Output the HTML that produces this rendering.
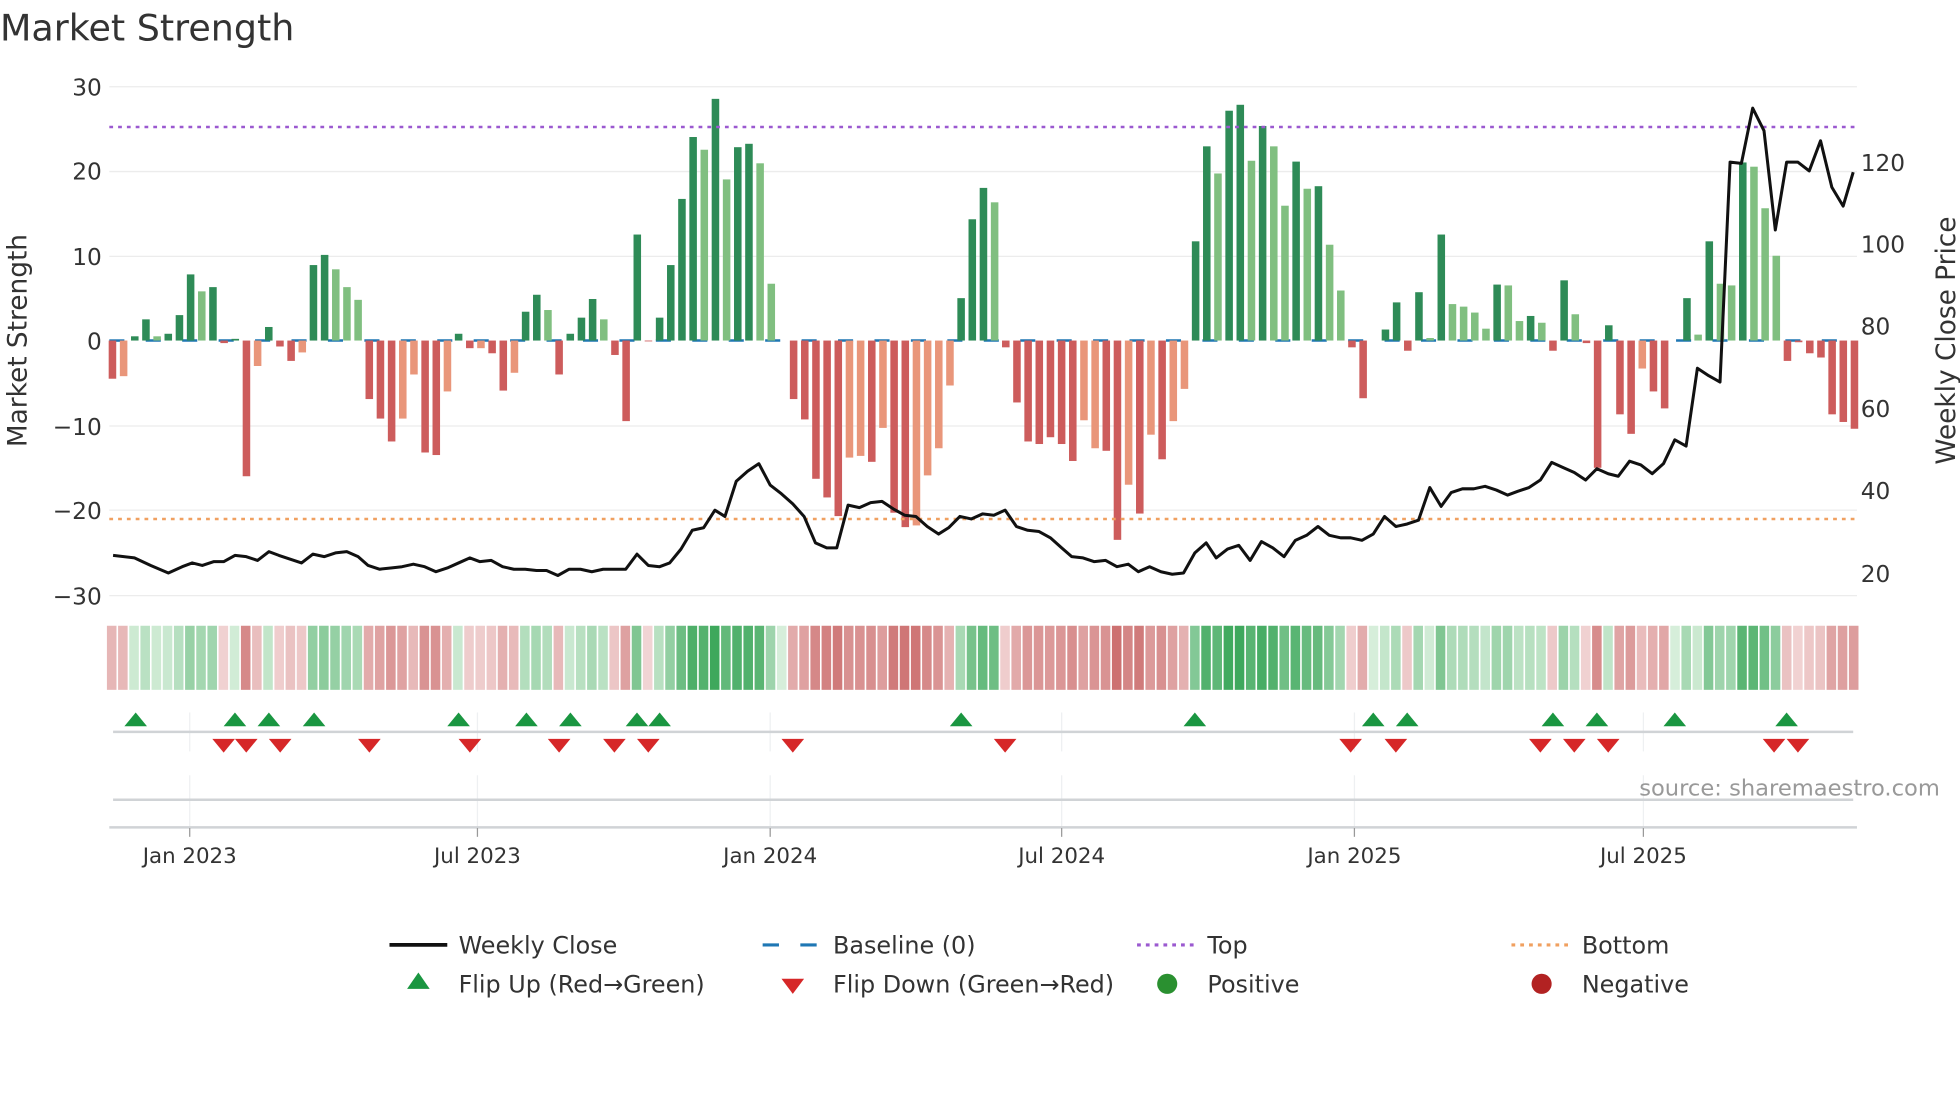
<!DOCTYPE html>
<html><head><meta charset="utf-8"><style>
html,body{margin:0;padding:0;background:#fff;}
svg{display:block;font-family:"DejaVu Sans","Liberation Sans",sans-serif;}
</style></head><body>
<svg id="s" width="1960" height="1102" viewBox="0 0 1560 877" xmlns="http://www.w3.org/2000/svg">
<rect width="1560" height="877" fill="#fff"/>
<text x="0" y="32" font-size="29" fill="#333">Market Strength</text>
<g stroke="#ececec" stroke-width="1">
<line x1="87" x2="1478" y1="69" y2="69"/><line x1="87" x2="1478" y1="136.5" y2="136.5"/>
<line x1="87" x2="1478" y1="204" y2="204"/><line x1="87" x2="1478" y1="339" y2="339"/>
<line x1="87" x2="1478" y1="406" y2="406"/><line x1="87" x2="1478" y1="474" y2="474"/>
</g>
<g font-size="18.5" fill="#333" text-anchor="end">
<text x="81" y="76">30</text><text x="81" y="143">20</text><text x="81" y="211">10</text>
<text x="81" y="278">0</text><text x="81" y="346">−10</text><text x="81" y="413">−20</text><text x="81" y="481">−30</text>
</g>
<g font-size="18.5" fill="#333">
<text x="1481" y="136">120</text><text x="1481" y="201">100</text><text x="1481" y="266">80</text>
<text x="1481" y="332">60</text><text x="1481" y="397">40</text><text x="1481" y="463">20</text>
</g>
<text transform="translate(21,271) rotate(-90)" font-size="21" fill="#333" text-anchor="middle">Market Strength</text>
<text transform="translate(1556,271) rotate(-90)" font-size="21" fill="#333" text-anchor="middle">Weekly Close Price</text>
<line x1="87" x2="1478" y1="271" y2="271" stroke="#1f77b4" stroke-width="2" stroke-dasharray="12,17"/>
<g id="bars"></g>
<g id="heat"></g>
<line x1="87" x2="1478" y1="101" y2="101" stroke="#9b59d0" stroke-width="2" stroke-dasharray="3,4"/>
<line x1="87" x2="1478" y1="413" y2="413" stroke="#f0a060" stroke-width="2" stroke-dasharray="3,4"/>
<polyline id="price" fill="none" stroke="#111" stroke-width="2.4" stroke-linejoin="round" points=""/>
<g stroke="#eef0f2" stroke-width="1">
<line x1="151" x2="151" y1="567" y2="598"/><line x1="380" x2="380" y1="567" y2="598"/><line x1="613" x2="613" y1="567" y2="598"/>
<line x1="845" x2="845" y1="567" y2="598"/><line x1="1078" x2="1078" y1="567" y2="598"/><line x1="1308" x2="1308" y1="567" y2="598"/>
<line x1="151" x2="151" y1="617" y2="658"/><line x1="380" x2="380" y1="617" y2="658"/><line x1="613" x2="613" y1="617" y2="658"/>
<line x1="845" x2="845" y1="617" y2="658"/><line x1="1078" x2="1078" y1="617" y2="658"/><line x1="1308" x2="1308" y1="617" y2="658"/>
</g>
<line x1="90" x2="1475" y1="582.5" y2="582.5" stroke="#d0d3d6" stroke-width="2"/>
<line x1="90" x2="1475" y1="636.5" y2="636.5" stroke="#d0d3d6" stroke-width="2"/>
<line x1="87" x2="1478" y1="658.5" y2="658.5" stroke="#d0d3d6" stroke-width="2"/>
<g stroke="#999" stroke-width="1">
<line x1="151" x2="151" y1="659" y2="666"/><line x1="380" x2="380" y1="659" y2="666"/><line x1="613" x2="613" y1="659" y2="666"/>
<line x1="845" x2="845" y1="659" y2="666"/><line x1="1078" x2="1078" y1="659" y2="666"/><line x1="1308" x2="1308" y1="659" y2="666"/>
</g>
<g id="mk"></g>
<g font-size="17" fill="#333" text-anchor="middle">
<text x="151" y="687">Jan 2023</text><text x="380" y="687">Jul 2023</text><text x="613" y="687">Jan 2024</text>
<text x="845" y="687">Jul 2024</text><text x="1078" y="687">Jan 2025</text><text x="1308" y="687">Jul 2025</text>
</g>
<text x="1544" y="633" font-size="18" fill="#999" text-anchor="end">source: sharemaestro.com</text>
<g font-size="19" fill="#333">
<line x1="310" x2="356" y1="752" y2="752" stroke="#111" stroke-width="3"/>
<text x="365" y="759">Weekly Close</text>
<line x1="607" x2="651" y1="752" y2="752" stroke="#1f77b4" stroke-width="2.5" stroke-dasharray="13,17"/>
<text x="663" y="759">Baseline (0)</text>
<line x1="905" x2="950" y1="752" y2="752" stroke="#9b59d0" stroke-width="2.5" stroke-dasharray="3,4"/>
<text x="961" y="759">Top</text>
<line x1="1203" x2="1248" y1="752" y2="752" stroke="#f0a060" stroke-width="2.5" stroke-dasharray="3,4"/>
<text x="1259" y="759">Bottom</text>
<polygon points="333,774 342,787 324,787" fill="#1a9641"/>
<text x="365" y="790">Flip Up (Red→Green)</text>
<polygon points="622,779 640,779 631,791" fill="#d62728"/>
<text x="663" y="790">Flip Down (Green→Red)</text>
<circle cx="929" cy="783" r="8" fill="#2a9030"/>
<text x="961" y="790">Positive</text>
<circle cx="1227" cy="783" r="8" fill="#b22222"/>
<text x="1259" y="790">Negative</text>
</g>
</svg>
<script>
var V=[-4.5,-4.2,0.5,2.5,0.5,0.8,3,7.8,5.8,6.3,-0.3,0.2,-16,-3,1.6,-0.7,-2.4,-1.4,8.9,10.1,8.4,6.3,4.8,-6.9,-9.2,-11.9,-9.2,-4,-13.2,-13.5,-6,0.8,-0.9,-0.9,-1.5,-5.9,-3.8,3.4,5.4,3.6,-4,0.8,2.7,4.9,2.5,-1.7,-9.5,12.5,-0.1,2.7,8.9,16.7,24,22.5,28.5,19,22.8,23.2,20.9,6.7,0,-6.9,-9.3,-16.3,-18.5,-20.7,-13.8,-13.6,-14.3,-10.3,-20.3,-22,-21.8,-15.9,-12.7,-5.3,5,14.3,18,16.3,-0.8,-7.3,-11.9,-12.2,-11.4,-12.2,-14.2,-9.4,-12.7,-13,-23.5,-17,-20.4,-11.1,-14,-9.5,-5.7,11.7,22.9,19.7,27.1,27.8,21.2,25.3,22.9,15.9,21.1,17.9,18.2,11.3,5.9,-0.8,-6.8,0,1.3,4.5,-1.2,5.7,0.3,12.5,4.3,4,3.3,1.4,6.6,6.5,2.3,2.9,2.1,-1.2,7.1,3.1,-0.3,-15,1.8,-8.7,-11,-3.3,-6,-8,0,5,0.7,11.7,6.7,6.5,21,20.5,15.6,10,-2.4,-0.2,-1.5,-2,-8.7,-9.6,-10.4];
var L=[1,0,1,1,0,1,1,1,0,1,1,1,1,0,1,1,1,0,1,1,0,0,0,1,1,1,0,0,1,1,0,1,1,0,1,1,0,1,1,0,1,1,1,1,0,1,1,1,1,1,1,1,1,0,1,0,1,1,0,0,1,1,1,1,1,1,0,0,1,0,1,1,0,0,0,0,1,1,1,0,1,1,1,1,1,1,1,0,0,1,1,0,1,0,1,0,0,1,1,0,1,1,0,1,0,0,1,0,1,0,0,1,1,1,1,1,1,1,0,1,0,0,0,0,1,0,0,1,0,1,1,0,1,1,1,1,1,0,1,1,1,1,0,1,0,0,1,0,0,0,1,1,1,1,1,1,1];
var ns="http://www.w3.org/2000/svg",bars=document.getElementById('bars'),heat=document.getElementById('heat');
function R(g,x,y,w,h,f){var r=document.createElementNS(ns,'rect');r.setAttribute('x',x);r.setAttribute('y',y);r.setAttribute('width',w);r.setAttribute('height',h);r.setAttribute('fill',f);g.appendChild(r);}
function mix(a,b,t){return 'rgb('+a.map(function(c,i){return Math.round(c+(b[i]-c)*t)}).join(',')+')';}
var n=V.length,step=(1476-89.5)/(n-1);
for(var i=0;i<n;i++){var v=V[i],x=89.5+i*step,dark=L[i];
 var col=v>=0?(dark?'#2e8b57':'#80bf80'):(dark?'#cd5c5c':'#e9967a');
 var h=Math.abs(v)*6.75;
 if(h>0.3)R(bars,x-3,v>=0?271-h:271,6,h,col);
 var t=Math.min(1,Math.abs(v)/28);
 var hc=v>=0?mix([214,238,218],[62,168,92],Math.pow(t,0.7)):mix([242,214,214],[200,100,100],Math.pow(t,0.7));
 R(heat,x-4.4,498,7.6,51,hc);}
var P=[[90,442],[107,444],[120,450],[134,456],[145,451],[153,448],[161,450],[170,447],[178,447],[187,442],[196,443],[205,446],[214,439],[222,442],[231,445],[240,448],[249,441],[258,443],[267,440],[276,439],[285,443],[293,450],[302,453],[311,452],[320,451],[329,449],[338,451],[347,455],[356,452],[365,448],[374,444],[382,447],[391,446],[400,451],[409,453],[418,453],[427,454],[435,454],[444,458],[453,453],[462,453],[471,455],[480,453],[489,453],[498,453],[507,441],[516,450],[525,451],[533,448],[542,437],[551,422],[560,420],[569,406],[577,411],[586,383],[595,375],[604,369],[613,386],[622,393],[631,401],[640,411],[649,432],[658,436],[666,436],[675,402],[684,404],[693,400],[702,399],[711,405],[720,410],[729,411],[738,419],[747,425],[755,420],[764,411],[773,413],[782,409],[791,410],[800,406],[809,419],[818,422],[827,423],[836,428],[845,436],[853,443],[862,444],[871,447],[880,446],[889,451],[898,449],[906,455],[915,451],[924,455],[933,457],[942,456],[951,440],[960,432],[968,444],[977,437],[986,434],[995,446],[1004,431],[1013,436],[1022,443],[1031,430],[1040,426],[1049,419],[1058,426],[1067,428],[1075,428],[1084,430],[1093,425],[1102,411],[1111,419],[1120,417],[1129,414],[1138,388],[1147,403],[1155,392],[1164,389],[1173,389],[1182,387],[1191,390],[1200,394],[1208,391],[1217,388],[1226,382],[1235,368],[1244,372],[1253,376],[1262,382],[1271,373],[1280,377],[1288,379],[1297,367],[1306,370],[1315,377],[1324,369],[1333,350],[1342,355],[1351,293],[1360,299],[1369,304],[1377,129],[1386,130],[1395,86],[1404,104],[1413,183],[1422,129],[1431,129],[1440,136],[1449,112],[1458,149],[1467,164],[1475,137]];
document.getElementById('price').setAttribute('points',P.map(function(p){return p.join(',')}).join(' '));
var mk=document.getElementById('mk');
function tri(x,up){var p=document.createElementNS(ns,'polygon');
 p.setAttribute('points',up?(x+','+567+' '+(x+9)+',578 '+(x-9)+',578'):((x-9)+',588 '+(x+9)+',588 '+x+',599'));
 p.setAttribute('fill',up?'#1a9641':'#d62728');mk.appendChild(p);}
[108,187,214,250,365,419,454,507,525,765,951,1093,1120,1236,1271,1333,1422].forEach(function(x){tri(x,1)});
[178,196,223,294,374,445,489,516,631,800,1075,1111,1226,1253,1280,1412,1431].forEach(function(x){tri(x,0)});
</script>
</body></html>
